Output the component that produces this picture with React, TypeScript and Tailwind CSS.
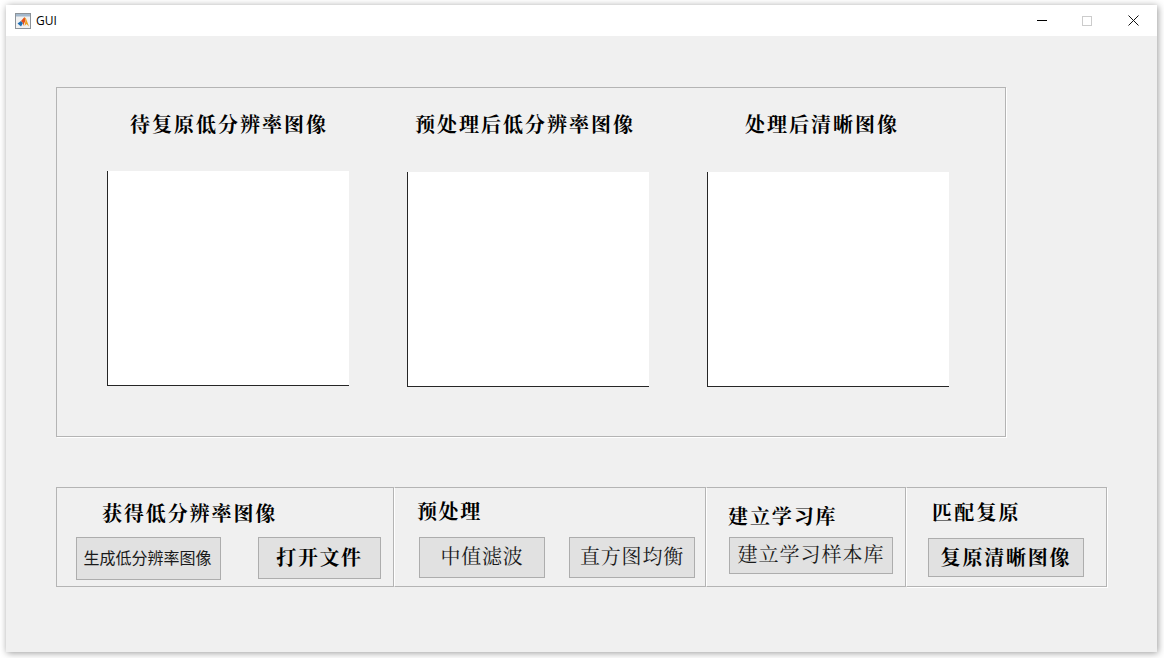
import React from 'react';

const cjkBold = "font-['Liberation_Serif','Noto_Serif_CJK_SC','Noto_Sans_CJK_SC',serif] font-bold text-black";
const cjkPlain = "pb-[2px] font-['Liberation_Serif','Noto_Serif_CJK_SC','Noto_Sans_CJK_SC',serif] text-[20px]";

const MatlabIcon = () => (
  <svg width="16" height="16" viewBox="0 0 16 16">
    <rect x="0.5" y="0.5" width="15" height="15" fill="#f1f1f1" stroke="#8d9399" />
    <rect x="1" y="1" width="14" height="2.5" fill="#a3b8cc" />
    <path d="M2.5 10.5 L6 8 L8 10 L6 13.5 Z" fill="#1f6fb5" />
    <path d="M6 8 L9.5 4 L10.5 7.5 L8 13 L8 10 Z" fill="#e2501c" />
    <path d="M9.5 4 L11 5.5 L14 13.5 L11.5 11 L9.5 13 L10.5 7.5 Z" fill="#f0a020" />
  </svg>
);

const Axes = () => (
  <div className="h-[215px] w-[242px] border-b border-l border-b-[#262626] border-l-[#262626] bg-white" />
);

const Button = ({ label, className }: { label: string; className: string }) => (
  <button className={`flex shrink-0 items-center justify-center border border-[#adadad] bg-[#e1e1e1] text-[#1a1a1a] ${className}`}>
    {label}
  </button>
);

export default function App() {
  return (
    <div className="h-screen w-full overflow-hidden bg-white pb-[6px] pl-[6px] pr-[7px] pt-[5px]">
      <div className="flex h-full flex-col bg-[#f0f0f0] shadow-[1px_1px_7px_rgba(0,0,0,0.4)]">
        {/* Title bar */}
        <div className="flex h-[31px] shrink-0 items-center bg-white pl-[9px] font-['Open_Sans','Liberation_Sans',sans-serif] text-[12px] text-black">
          <MatlabIcon />
          <span className="ml-[5px]">GUI</span>
          <div className="ml-auto flex items-center pr-[18px]">
            <span className="h-px w-[10px] bg-black" />
            <span className="ml-[35px] h-[10px] w-[10px] border border-[#cccccc]" />
            <svg className="ml-[36px]" width="11" height="11" viewBox="0 0 11 11">
              <path d="M0.5 0.5 L10.5 10.5 M10.5 0.5 L0.5 10.5" stroke="#111" strokeWidth="1" fill="none" />
            </svg>
          </div>
        </div>

        <div className="flex flex-col pl-[50px] pt-[51px]">
          {/* Image panel */}
          <div className="h-[350px] w-[950px] border border-[#b4b4b4] pl-[50px] shadow-[1px_1px_0_white]">
            <div className="flex gap-[58px]">
              <div className="flex w-[242px] flex-col items-center">
                <div className={`mt-[22px] h-[30px] translate-x-px whitespace-nowrap text-[20px] leading-[30px] tracking-[2px] ${cjkBold}`}>待复原低分辨率图像</div>
                <div className="mt-[31px]"><Axes /></div>
              </div>
              <div className="flex w-[242px] flex-col items-center">
                <div className={`mt-[22px] h-[30px] -translate-x-[3px] whitespace-nowrap text-[20px] leading-[30px] tracking-[2px] ${cjkBold}`}>预处理后低分辨率图像</div>
                <div className="mt-[32px]"><Axes /></div>
              </div>
              <div className="flex w-[242px] flex-col items-center">
                <div className={`mt-[22px] h-[30px] -translate-x-[6px] whitespace-nowrap text-[20px] leading-[30px] tracking-[2px] ${cjkBold}`}>处理后清晰图像</div>
                <div className="mt-[32px]"><Axes /></div>
              </div>
            </div>
          </div>

          {/* Control panels */}
          <div className="mt-[50px] flex h-[100px] w-[1051px]">
            <div className="flex h-full w-[338px] flex-col border border-[#b4b4b4] pl-[19px]">
              <div className={`ml-[26px] mt-[11px] h-[30px] text-[20px] leading-[30px] tracking-[1.9px] ${cjkBold}`}>获得低分辨率图像</div>
              <div className="mt-[8px] flex items-start gap-[37px]">
                <Button label="生成低分辨率图像" className="h-[43px] w-[145px] pb-[3px] pr-[2px] font-['Noto_Sans_CJK_SC',sans-serif] text-[16px]" />
                <Button label="打开文件" className={`h-[42px] w-[123px] text-[20px] tracking-[1.6px] ${cjkBold}`} />
              </div>
            </div>
            <div className="flex h-full w-[312px] flex-col border border-[#b4b4b4] border-l-white pl-[24px]">
              <div className={`-ml-[2px] mt-[9px] h-[30px] text-[20px] leading-[30px] tracking-[1.6px] ${cjkBold}`}>预处理</div>
              <div className="mt-[10px] flex items-start gap-[24px]">
                <Button label="中值滤波" className={`h-[41px] w-[126px] tracking-[0.8px] ${cjkPlain}`} />
                <Button label="直方图均衡" className={`h-[41px] w-[126px] tracking-[0.8px] ${cjkPlain}`} />
              </div>
            </div>
            <div className="flex h-full w-[200px] flex-col border border-[#b4b4b4] border-l-white pl-[22px]">
              <div className={`-ml-px mt-[14px] h-[30px] text-[20px] leading-[30px] tracking-[1.9px] ${cjkBold}`}>建立学习库</div>
              <div className="mt-[5px]">
                <Button label="建立学习样本库" className={`h-[37px] w-[164px] tracking-[1px] ${cjkPlain}`} />
              </div>
            </div>
            <div className="flex h-full w-[201px] flex-col border border-[#b4b4b4] border-l-white pl-[21px] shadow-[1px_1px_0_white]">
              <div className={`ml-[4px] mt-[10px] h-[30px] text-[20px] leading-[30px] tracking-[2.2px] ${cjkBold}`}>匹配复原</div>
              <div className="mt-[10px]">
                <Button label="复原清晰图像" className={`h-[39px] w-[156px] text-[20px] tracking-[1.8px] ${cjkBold}`} />
              </div>
            </div>
          </div>
        </div>
      </div>
    </div>
  );
}
